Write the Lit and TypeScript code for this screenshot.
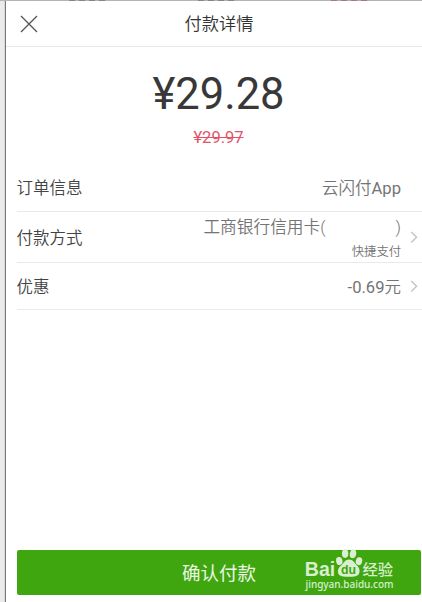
import { LitElement, html, css, svg } from "lit";
import { customElement, property } from "lit/decorators.js";

const chevron = html`<svg width="8" height="14" viewBox="0 0 8 14" fill="none" stroke="#c4c4c4" stroke-width="1.4"><path d="M1.2 2L6.6 7.2L1.2 12.4" /></svg>`;

@customElement("pay-row")
class PayRow extends LitElement {
  @property() label = "";
  @property({ type: Boolean }) arrow = false;
  static styles = css`
    :host { display: flex; box-sizing: border-box; align-items: center; border-bottom: 1px solid #e9e9e9; }
    .label { flex: 1; color: #444; padding-top: 3px; }
    .value { color: #747474; text-align: right; padding-top: 3px; }
    .arrow { width: 21px; display: flex; justify-content: flex-end; padding-right: 4px; box-sizing: border-box; }
  `;
  render() {
    return html`<div class="label">${this.label}</div>
      <div class="value"><slot></slot></div>
      <div class="arrow">${this.arrow ? chevron : ""}</div>`;
  }
}

@customElement("baidu-mark")
class BaiduMark extends LitElement {
  static styles = css`
    :host { display: block; width: 96px; height: 50px; }
    svg { display: block; overflow: visible; }
    .latin { font-family: "Liberation Sans", sans-serif; font-weight: 700; }
    .url { font-family: "Noto Sans", sans-serif; font-weight: 500; }
    .cjk { font-family: "Noto Sans CJK SC", sans-serif; font-weight: 500; }
  `;
  render() {
    return html`<svg width="96" height="50" viewBox="303 548 96 50" fill="#d9efcf">
      <text class="latin" x="304.8" y="575.6" font-size="19.5" textLength="30.5" lengthAdjust="spacingAndGlyphs">Bai</text>
      ${svg`
        <ellipse cx="339.3" cy="561" rx="3.2" ry="4" transform="rotate(-12 339.3 561)" />
        <ellipse cx="345.1" cy="553.6" rx="3.2" ry="4.4" />
        <ellipse cx="353" cy="553.8" rx="3.2" ry="4.4" transform="rotate(10 353 553.8)" />
        <ellipse cx="359" cy="561.2" rx="3.2" ry="4" transform="rotate(12 359 561.2)" />
        <path d="M349 559.6C352.8 559.6 354 562.5 356.6 565C359 567.4 360 569.4 359.4 572.6C358.7 576 355.6 577 349 576.8C342 577 338.6 576 338 572.6C337.4 569 339.4 567 341.6 565C344.3 562.6 345.2 559.6 349 559.6Z" />
      `}
      <text class="latin" x="341" y="574.4" font-size="12.5" fill="#40a60f" textLength="15" lengthAdjust="spacingAndGlyphs">du</text>
      <text class="cjk" x="362.5" y="574.9" font-size="15.3">经验</text>
      <text class="url" x="305.5" y="588" font-size="11.3" textLength="88" lengthAdjust="spacingAndGlyphs">jingyan.baidu.com</text>
    </svg>`;
  }
}

@customElement("app-root")
class AppRoot extends LitElement {
  static styles = css`
    :host {
      display: flex; flex-direction: column; position: relative; box-sizing: border-box;
      width: 422px; height: 602px; overflow: hidden;
      font: 350 16.5px/24px Roboto, "Noto Sans CJK SC", sans-serif;
      padding-left: 6px;
      background: linear-gradient(90deg, #ebebeb 0 4px, #d8d8d8 4px 5px, #777 5px 6px, #fff 6px);
    }
    .backdrop { height: 1px; flex: none; margin-left: -6px; background: #b4b4b4; display: flex; }
    .backdrop i { width: 38px; height: 1px; background: repeating-linear-gradient(90deg, #858585 0 6px, #b0b0b0 6px 10px); }
    .backdrop i:nth-child(1) { margin-left: 69px; }
    .backdrop i:nth-child(2) { margin-left: 91px; }
    .backdrop i:nth-child(3) { margin-left: 95px; background: repeating-linear-gradient(90deg, #a27c7c 0 6px, #b8aaaa 6px 10px); }
    header { height: 46px; box-sizing: border-box; border-bottom: 1px solid #e8e8e8; display: grid; grid-template-columns: 44px 1fr 34px; align-items: center; }
    header svg { margin-left: 14px; }
    h1 { margin: 0; padding-top: 1px; font-size: 17.3px; font-weight: 350; color: #333; text-align: center; }
    .price { height: 117px; font-weight: 400; text-align: center; padding-left: 9px; box-sizing: border-box; display: flow-root; }
    .total { font-size: 43.5px; line-height: 52px; margin-top: 22px; color: #383838; }
    .was { font-size: 16.5px; line-height: 20px; margin-top: 7px; color: #df5468; text-decoration: line-through; }
    .rows { padding-left: 10.5px; }
    .order { height: 48px; }
    .method { height: 51px; }
    .discount { height: 47px; }
    .latin { font-size: 16.6px; font-weight: 400; }
    .card { display: flex; justify-content: flex-end; font-size: 16.7px; }
    .gap { width: 70px; }
    .sub { font-size: 12.3px; line-height: 20px; margin-top: 2px; }
    button { margin: auto 1px 7px 11px; height: 45px; flex: none; border: 0; border-radius: 2px; background: #40a60f; color: #e9f7e3; font: 18.5px/45px "Noto Sans CJK SC", sans-serif; padding: 0; }
    .mark { position: absolute; left: 303px; top: 548px; }
  `;
  render() {
    return html`
      <div class="backdrop"><i></i><i></i><i></i></div>
      <header>
        <svg width="18" height="18" viewBox="0 0 18 18" stroke="#555" stroke-width="1.3"><path d="M1 1L17 17M17 1L1 17" /></svg>
        <h1>付款详情</h1>
      </header>
      <section class="price">
        <div class="total">¥29.28</div>
        <div class="was">¥29.97</div>
      </section>
      <section class="rows">
        <pay-row class="order" label="订单信息">云闪付<span class="latin">App</span></pay-row>
        <pay-row class="method" label="付款方式" arrow>
          <div class="card"><span>工商银行信用卡(</span><span class="gap"></span><span>)</span></div>
          <div class="sub">快捷支付</div>
        </pay-row>
        <pay-row class="discount" label="优惠" arrow><span class="latin">-0.69</span>元</pay-row>
      </section>
      <button>确认付款</button>
      <baidu-mark class="mark"></baidu-mark>
    `;
  }
}
